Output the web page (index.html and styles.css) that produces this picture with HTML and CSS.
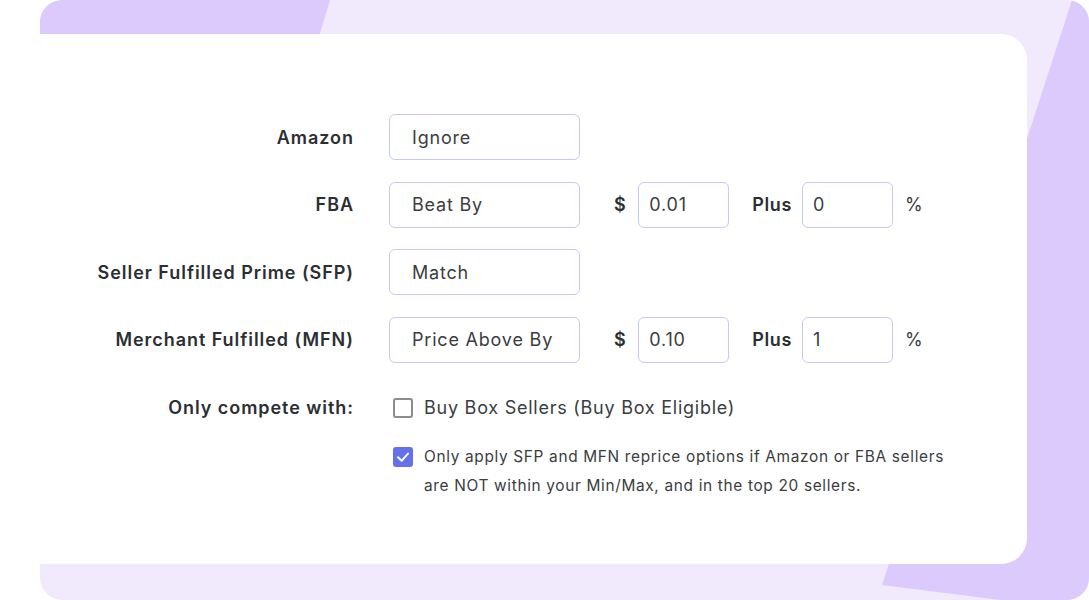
FILE: index.html
```html
<!DOCTYPE html>
<html>
<head>
<meta charset="utf-8">
<link rel="stylesheet" href="styles.css">
</head>
<body>
<div class="stage">
  <div class="card">
    <div class="form">
      <div class="label">Amazon</div>
      <div class="controls">
        <div class="select">Ignore</div>
      </div>

      <div class="label">FBA</div>
      <div class="controls">
        <div class="select">Beat By</div>
        <span class="unit dollar">$</span>
        <div class="num">0.01</div>
        <span class="unit plus">Plus</span>
        <div class="num">0</div>
        <span class="pct">%</span>
      </div>

      <div class="label">Seller Fulfilled Prime (SFP)</div>
      <div class="controls">
        <div class="select">Match</div>
      </div>

      <div class="label">Merchant Fulfilled (MFN)</div>
      <div class="controls">
        <div class="select">Price Above By</div>
        <span class="unit dollar">$</span>
        <div class="num">0.10</div>
        <span class="unit plus">Plus</span>
        <div class="num">1</div>
        <span class="pct">%</span>
      </div>

      <div class="label compete">Only compete with:</div>
      <div class="checks">
        <div class="check big">
          <span class="box"></span>
          <span class="ctext">Buy Box Sellers (Buy Box Eligible)</span>
        </div>
        <div class="check small">
          <span class="box on"><svg viewBox="0 0 20 20" width="20" height="20"><path d="M5 10.3 L8.6 13.8 L15 6.6" fill="none" stroke="#fff" stroke-width="2" stroke-linecap="round" stroke-linejoin="round"/></svg></span>
          <span class="ctext">Only apply SFP and MFN reprice options if Amazon or FBA sellers<br>are NOT within your Min/Max, and in the top 20 sellers.</span>
        </div>
      </div>
    </div>
  </div>
</div>
</body>
</html>
```

FILE: styles.css
```css
* { box-sizing: border-box; }
html, body { margin: 0; padding: 0; background: #ffffff; }
body {
  width: 1089px;
  height: 600px;
  overflow: hidden;
  font-family: Inter, "Noto Sans", "Liberation Sans", sans-serif;
  color: #2b2f33;
}
.stage {
  position: relative;
  margin-left: 40px;
  width: 1049px;
  height: 600px;
  padding-top: 34px;
  border-radius: 22px;
  overflow: hidden;
  background: #f1eafd;
}
.stage::before {
  content: "";
  position: absolute;
  left: 0;
  top: 0;
  width: 300px;
  height: 200px;
  background: #dccafd;
  clip-path: polygon(0 0, 290px 0, 230px 200px, 0 200px);
}
.stage::after {
  content: "";
  position: absolute;
  left: 840px;
  top: 0;
  width: 209px;
  height: 600px;
  background: #dccafd;
  clip-path: polygon(192px 0, 209px 0, 209px 600px, 120px 600px, 2px 585px);
}
.card {
  position: relative;
  z-index: 1;
  width: 987px;
  height: 530px;
  background: #ffffff;
  border-radius: 0 26px 26px 0;
  padding-top: 80px;
}
.form {
  display: grid;
  grid-template-columns: 314px auto;
  column-gap: 35px;
  row-gap: 21.5px;
  align-items: center;
}
.label {
  text-align: right;
  font-size: 18px;
  font-weight: 600;
  color: #2b2f33;
  letter-spacing: 0.95px;
}
.controls {
  display: flex;
  align-items: center;
  height: 46px;
}
.select, .num {
  height: 46px;
  border: 1.5px solid #c6c9f4;
  border-radius: 6px;
  display: flex;
  align-items: center;
  font-size: 18px;
  color: #3a3d41;
  letter-spacing: 0.8px;
}
.select { width: 191px; padding-left: 22px; }
.num { width: 91px; padding-left: 10px; }
.unit { font-size: 18px; font-weight: 600; color: #2b2f33; letter-spacing: 0.6px; }
.dollar { margin-left: 34px; margin-right: 12px; }
.plus { margin-left: 23px; margin-right: 10px; }
.pct { margin-left: 12px; font-size: 18px; color: #3a3d41; }
.compete { align-self: start; margin-top: 13px; }
.checks {
  display: flex;
  flex-direction: column;
  padding-left: 4px;
  padding-top: 14px;
  gap: 28px;
}
.check { display: flex; align-items: flex-start; }
.box {
  flex: none;
  width: 20px;
  height: 20px;
  border: 2px solid #8a8c8f;
  border-radius: 3px;
  margin-right: 11px;
  display: flex;
  align-items: center;
  justify-content: center;
}
.box.on { background: #6571e8; border-color: #6571e8; }
.box.on svg { display: block; flex: none; }
.big .ctext { font-size: 18px; line-height: 22px; color: #3a3d41; margin-top: -1px; letter-spacing: 0.75px; }
.small .ctext { font-size: 15.4px; line-height: 29px; color: #3a3d41; margin-top: -5px; letter-spacing: 0.67px; }
```
